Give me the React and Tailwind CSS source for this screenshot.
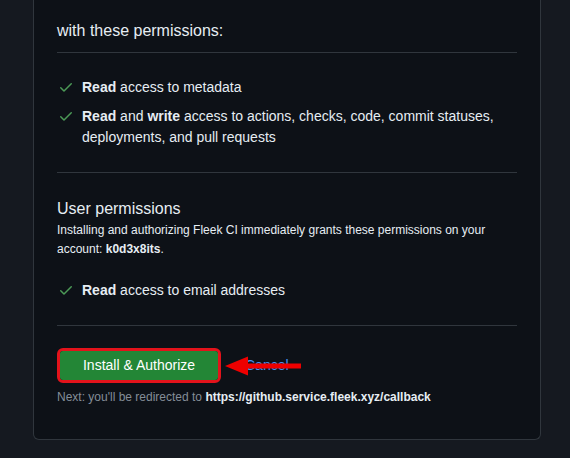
import React from "react";

function Check() {
  return (
    <svg width="16" height="16" viewBox="0 0 16 16" className="shrink-0 mt-[2px] fill-[#4c9a57]">
      <path d="M13.78 4.22a.75.75 0 0 1 0 1.06l-7.25 7.25a.75.75 0 0 1-1.06 0L2.22 9.28a.751.751 0 0 1 .018-1.042.751.751 0 0 1 1.042-.018L6 10.94l6.72-6.72a.75.75 0 0 1 1.06 0Z" />
    </svg>
  );
}

function Item({ children }) {
  return (
    <li className="flex gap-[8px] items-start">
      <Check />
      <span className="leading-[21px]">{children}</span>
    </li>
  );
}

export default function App() {
  return (
    <div className="min-h-[458px] bg-[#151920] text-[#e6edf3] pb-[20px]" style={{ fontFamily: '"Liberation Sans", Arial, sans-serif' }}>
      <div className="ml-[33px] w-[508px] bg-[#0d1117] border border-t-0 border-[#30363d] rounded-b-[6px] px-[23px] pb-[33px]">
        <div className="pt-[20px] pb-[10px] border-b border-[#30363d] text-[16px] leading-[22px]">
          with these permissions:
        </div>
        <ul className="pt-[24px] pb-[24px] flex flex-col gap-[8px] text-[14px] pl-[1px] border-b border-[#30363d]">
          <Item><b>Read</b> access to metadata</Item>
          <Item><b>Read</b> and <b>write</b> access to actions, checks, code, commit statuses, deployments, and pull requests</Item>
        </ul>
        <div className="pt-[25px]">
          <div className="text-[16px] leading-[22px]">User permissions</div>
          <p className="text-[12px] leading-[19px] mt-[1px]">
            Installing and authorizing Fleek CI immediately grants these permissions on your account: <b>k0d3x8its</b>.
          </p>
        </div>
        <ul className="pt-[21px] pb-[24px] flex flex-col gap-[8px] text-[14px] pl-[1px] border-b border-[#30363d]">
          <Item><b>Read</b> access to email addresses</Item>
        </ul>
        <div className="pt-[22px]">
          <div className="relative flex items-center gap-[24px]">
            <div className="rounded-[6px] border-[3px] border-[#e3131b]">
              <button className="block h-[29px] w-[158px] bg-[#238636] rounded-[3px] text-white text-[14px]">
                Install &amp; Authorize
              </button>
            </div>
            <a className="text-[#4493f8] text-[14px]">Cancel</a>
            <svg className="absolute left-[168px] top-[7px]" width="78" height="22" viewBox="0 0 78 22">
              <polygon points="0,11 23,1.5 23,8.5 76,8.5 76,13.5 23,13.5 23,20.5" fill="#ee0000" />
            </svg>
          </div>
          <p className="mt-[5px] text-[12px] text-[#848d97]">
            Next: you'll be redirected to <b className="text-[#e6edf3]">https://github.service.fleek.xyz/callback</b>
          </p>
        </div>
      </div>
    </div>
  );
}
